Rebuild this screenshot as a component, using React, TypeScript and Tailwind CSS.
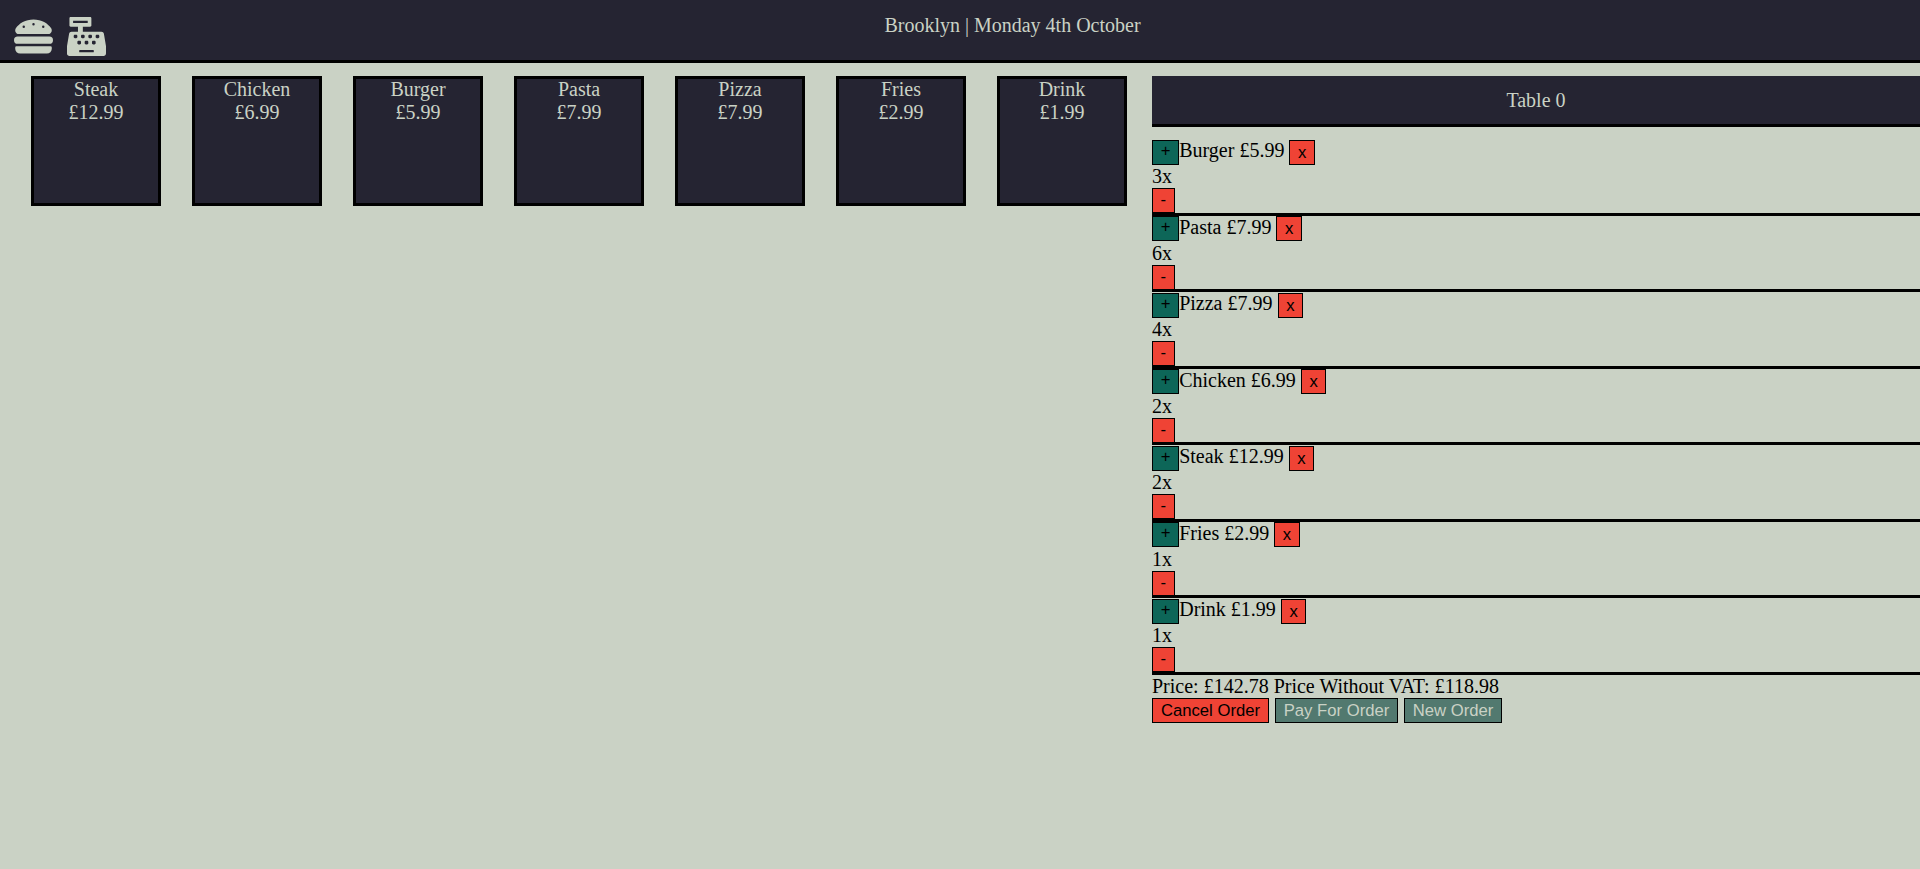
import React from "react";
import { FaHamburger, FaCashRegister } from "react-icons/fa";

const menu = [
  ["Steak", "£12.99"],
  ["Chicken", "£6.99"],
  ["Burger", "£5.99"],
  ["Pasta", "£7.99"],
  ["Pizza", "£7.99"],
  ["Fries", "£2.99"],
  ["Drink", "£1.99"],
];

const order: [string, string, number][] = [
  ["Burger", "£5.99", 3],
  ["Pasta", "£7.99", 6],
  ["Pizza", "£7.99", 4],
  ["Chicken", "£6.99", 2],
  ["Steak", "£12.99", 2],
  ["Fries", "£2.99", 1],
  ["Drink", "£1.99", 1],
];

const button =
  "h-[25px] shrink-0 border border-black font-['Liberation_Sans',Arial,sans-serif] text-[16.67px] text-center whitespace-nowrap";

export default function App() {
  return (
    <div className="h-screen overflow-hidden bg-[#cad2c5] font-['Liberation_Serif','Times_New_Roman',serif] text-[20px] leading-[23px] text-black">
      <header className="flex h-[63px] border-b-[3px] border-black bg-[#252432] text-[#cad2c5]">
        <nav className="flex w-[105px] gap-[14px] pt-[17px] pl-[14px]">
          <FaHamburger className="size-[39px] shrink-0" />
          <FaCashRegister className="size-[39px] shrink-0" />
        </nav>
        <p className="flex-1 pt-[14px] text-center">Brooklyn | Monday 4th October</p>
      </header>
      <main className="flex pt-[13px]">
        <section className="flex w-[1152px] shrink-0 gap-[31px] pl-[31px]">
          {menu.map(([name, price]) => (
            <div
              key={name}
              className="size-[130px] shrink-0 border-[3px] border-black bg-[#252432] text-center text-[#cad2c5]"
            >
              <p className="-mt-px">{name}</p>
              <p>{price}</p>
            </div>
          ))}
        </section>
        <section className="flex-1">
          <h1 className="h-[51px] border-b-[3px] border-black bg-[#252432] pt-[13px] text-center text-[#cad2c5]">
            Table 0
          </h1>
          <ul className="pt-[12.4px]">
            {order.map(([name, price, count]) => (
              <li key={name} className="h-[76.5px] border-b-[3px] border-black pt-[0.2px]">
                <div className="flex h-[25px]">
                  <button className={`${button} w-[27px] bg-[#0d6658] pb-[3px] leading-[20px]`}>+</button>
                  <span className="-mt-[0.2px] pr-[5px] pl-[0.2px]">
                    {name} {price}
                  </span>
                  <button className={`${button} w-[25.6px] bg-[#ef4335] leading-[23px]`}>x</button>
                </div>
                <p className="h-[23.6px] pt-[0.5px]">{count}x</p>
                <button className={`${button} block w-[22.6px] bg-[#ef4335] pb-px leading-[22px]`}>-</button>
              </li>
            ))}
          </ul>
          <p>Price: £142.78 Price Without VAT: £118.98</p>
          <div className="flex gap-[6px]">
            <button className={`${button} w-[117px] bg-[#ef4335] leading-[23px]`}>Cancel Order</button>
            <button className={`${button} w-[123px] bg-[#52796f] leading-[23px] text-[#cad2c5]`}>Pay For Order</button>
            <button className={`${button} w-[98px] bg-[#52796f] leading-[23px] text-[#cad2c5]`}>New Order</button>
          </div>
        </section>
      </main>
    </div>
  );
}
